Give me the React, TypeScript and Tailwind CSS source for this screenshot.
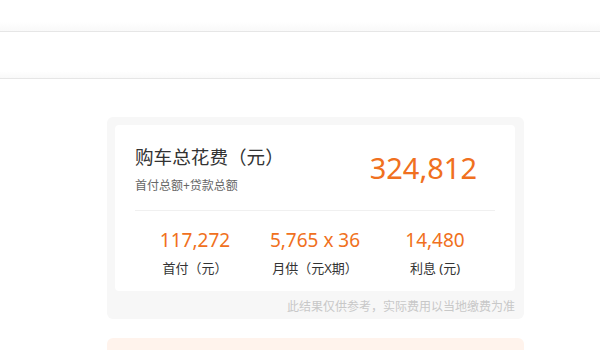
import React from "react";

const cjk = { fontFamily: '"Noto Sans", "Noto Sans CJK SC", sans-serif' };

export default function App() {
  const items = [
    { v: "117,272", l: "首付（元）" },
    { v: "5,765 x 36", l: "月供（元X期）" },
    { v: "14,480", l: "利息 (元)" },
  ];
  return (
    <div className="w-[600px] h-[350px] overflow-hidden bg-white" style={cjk}>
      <div className="h-[32px] border-b border-[#e6e6e6] bg-gradient-to-b from-white from-70% to-[#f9f9f9]" />
      <div className="h-[47px] border-b border-[#e6e6e6] bg-gradient-to-b from-white from-85% to-[#f9f9f9]" />
      <div className="ml-[107px] mt-[38px] w-[417px] rounded-md bg-[#f7f7f7] pl-[8px] pr-[9px] pt-[8px] pb-[4px]">
        <div className="w-[400px] bg-white rounded-sm pb-[14px]">
          <div className="flex items-start justify-between pl-[20px] pr-[38px] pt-[19px]">
            <div>
              <div className="text-[18.6px] leading-[26px] text-[#333]">购车总花费（元）</div>
              <div className="mt-[7px] text-[12px] leading-[18px] text-[#666]">首付总额+贷款总额</div>
            </div>
            <div className="mt-[4px] text-[29px] leading-[40px] text-[#f07020]">324,812</div>
          </div>
          <div className="mx-[20px] mt-[15px] h-px bg-[#f0f0f0]" />
          <div className="mx-[20px] mt-[17px] grid grid-cols-3">
            {items.map((it) => (
              <div key={it.v} className="flex flex-col items-center">
                <div className="text-[19px] leading-[24px] text-[#f07020]">{it.v}</div>
                <div className="mt-[7px] text-[13px] leading-[18px] text-[#333]">{it.l}</div>
              </div>
            ))}
          </div>
        </div>
        <div className="mt-[8px] text-right text-[12px] leading-[16px] text-[#c8c8c8]">
          此结果仅供参考，实际费用以当地缴费为准
        </div>
      </div>
      <div className="ml-[107px] mt-[19px] w-[417px] h-[60px] rounded-md bg-[#fff3ec]" />
    </div>
  );
}
